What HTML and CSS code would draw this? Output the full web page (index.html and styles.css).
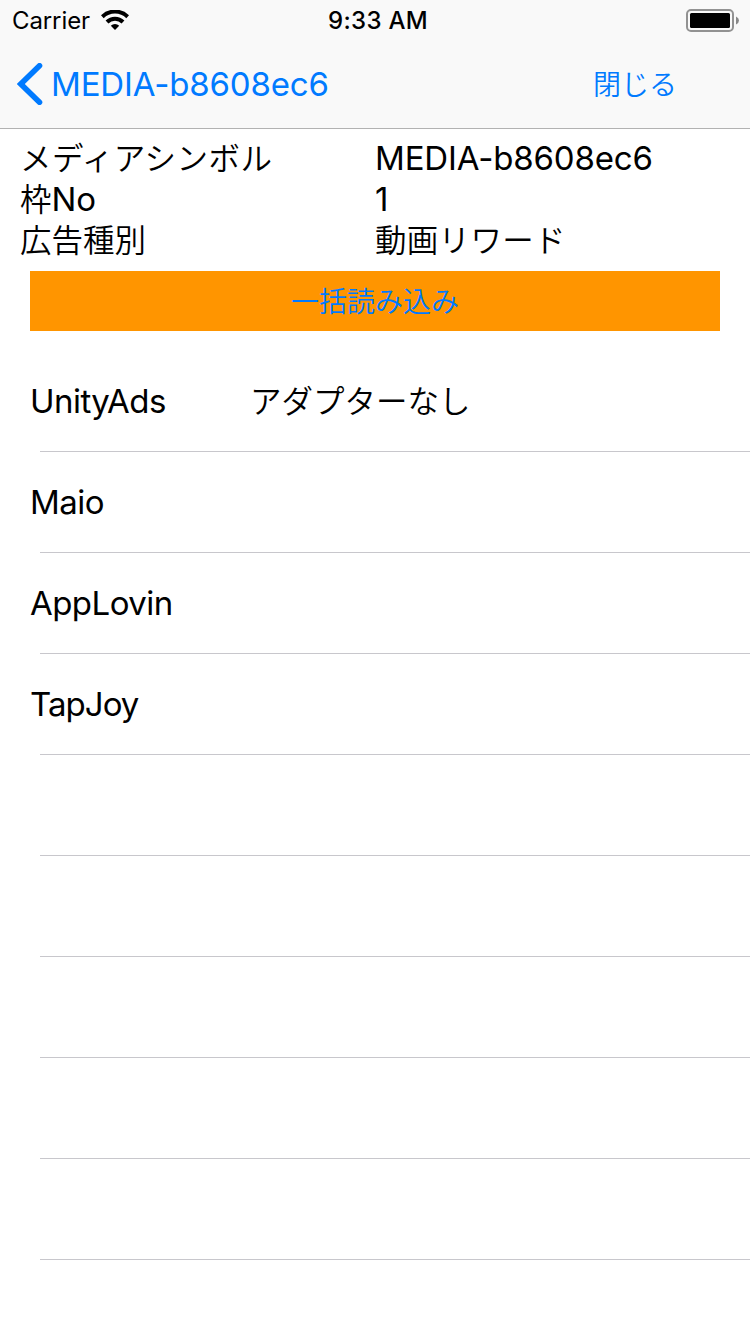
FILE: index.html
```html
<!DOCTYPE html>
<html lang="ja">
<head>
<meta charset="utf-8">
<title>MEDIA-b8608ec6</title>
<link rel="stylesheet" href="styles.css">
</head>
<body>
<header class="top">
  <div class="status">
    <div class="status-left">
      <span class="carrier">Carrier</span>
      <svg class="wifi" viewBox="0 0 28 20" width="28" height="20">
        <g fill="none" stroke="#000" stroke-width="4">
          <path d="M1.300 6.700a18.200 18.200 0 0 1 25.400 0"/>
          <path d="M6 12a11.300 11.300 0 0 1 16 0"/>
        </g>
        <path d="M14 20l-4.200-4.300a6 6 0 0 1 8.400 0z"/>
      </svg>
    </div>
    <span class="clock">9:33 AM</span>
    <svg class="battery" viewBox="0 0 54 23" width="54" height="23">
      <rect x="1" y="1" width="46" height="21" rx="4" fill="none" stroke="#929292" stroke-width="2"/>
      <rect x="4" y="4" width="40" height="15" rx="1.500"/>
      <path d="M50 7.500q3 1.500 3 4t-3 4z" fill="#888"/>
    </svg>
  </div>
  <nav class="nav">
    <a class="back">
      <svg width="26" height="42" viewBox="0 0 26 42"><path d="M22.500 2.800L3.800 21l18.700 18.200" fill="none" stroke="#007aff" stroke-width="5.600" stroke-linecap="round"/></svg>
      <span class="back-label">MEDIA-b8608ec6</span>
    </a>
    <a class="close">閉じる</a>
  </nav>
</header>
<main>
  <dl class="info">
    <dt class="wide">メディアシンボル</dt><dd class="latin">MEDIA-b8608ec6</dd>
    <dt>枠<span class="latin">No</span></dt><dd class="latin">1</dd>
    <dt>広告種別</dt><dd class="reward">動画リワード</dd>
  </dl>
  <button class="load">一括読み込み</button>
  <ul class="list">
    <li><span class="name">UnityAds</span><span class="note">アダプターなし</span></li>
    <li><span class="name">Maio</span></li>
    <li><span class="name">AppLovin</span></li>
    <li><span class="name tight">TapJoy</span></li>
    <li></li><li></li><li></li><li></li><li></li>
  </ul>
</main>
</body>
</html>
```
FILE: styles.css
```css
* { box-sizing: border-box; margin: 0; padding: 0; }
body { height: 1334px; overflow: hidden; background: #fff; color: #000; font: 33px/41px Inter, "Noto Sans CJK JP", sans-serif; }
.top { height: 129px; background: #f9f9f9; border-bottom: 1px solid #b2b2b2; }
.status { height: 40px; padding: 1px 10px 0 12px; display: grid; grid-template-columns: 1fr auto 1fr; align-items: center; font-size: 24px; line-height: 40px; }
.status-left { display: flex; align-items: center; gap: 11px; }
.carrier { letter-spacing: -0.1px; }
.wifi { margin-bottom: 2px; }
.clock { font-weight: 550; letter-spacing: 0.3px; padding-left: 4px; }
.battery { justify-self: end; margin-bottom: 1px; }
.nav { height: 88px; padding: 0 73px 0 17px; display: flex; align-items: center; justify-content: space-between; color: #007aff; }
.back { display: flex; align-items: center; gap: 8px; }
.back-label { letter-spacing: -0.16px; }
.close { font-size: 28px; font-weight: 350; padding-top: 3px; }
.info { padding: 9px 20px 0; display: grid; grid-template-columns: 355px 1fr; grid-auto-rows: 41px; font-size: 31.5px; font-weight: 350; }
.info dt, .info dd { white-space: nowrap; }
.info .latin { font-size: 33px; font-weight: 400; letter-spacing: -0.16px; }
.info .wide { letter-spacing: 0.5px; }
.info .reward { letter-spacing: 0.3px; }
.load { display: block; width: 690px; height: 60px; margin: 10px 30px 20px; padding-top: 2px; border: 0; background: #ff9500; color: #007aff; font: 350 28px/58px Inter, "Noto Sans CJK JP", sans-serif; }
.list { list-style: none; }
.list li { height: 101px; margin-left: 40px; border-bottom: 1px solid #c8c7cc; display: flex; align-items: center; }
.name { width: 220px; margin-left: -10px; letter-spacing: -0.55px; }
.tight { letter-spacing: -0.95px; }
.note { font-size: 31.5px; font-weight: 350; }
```
